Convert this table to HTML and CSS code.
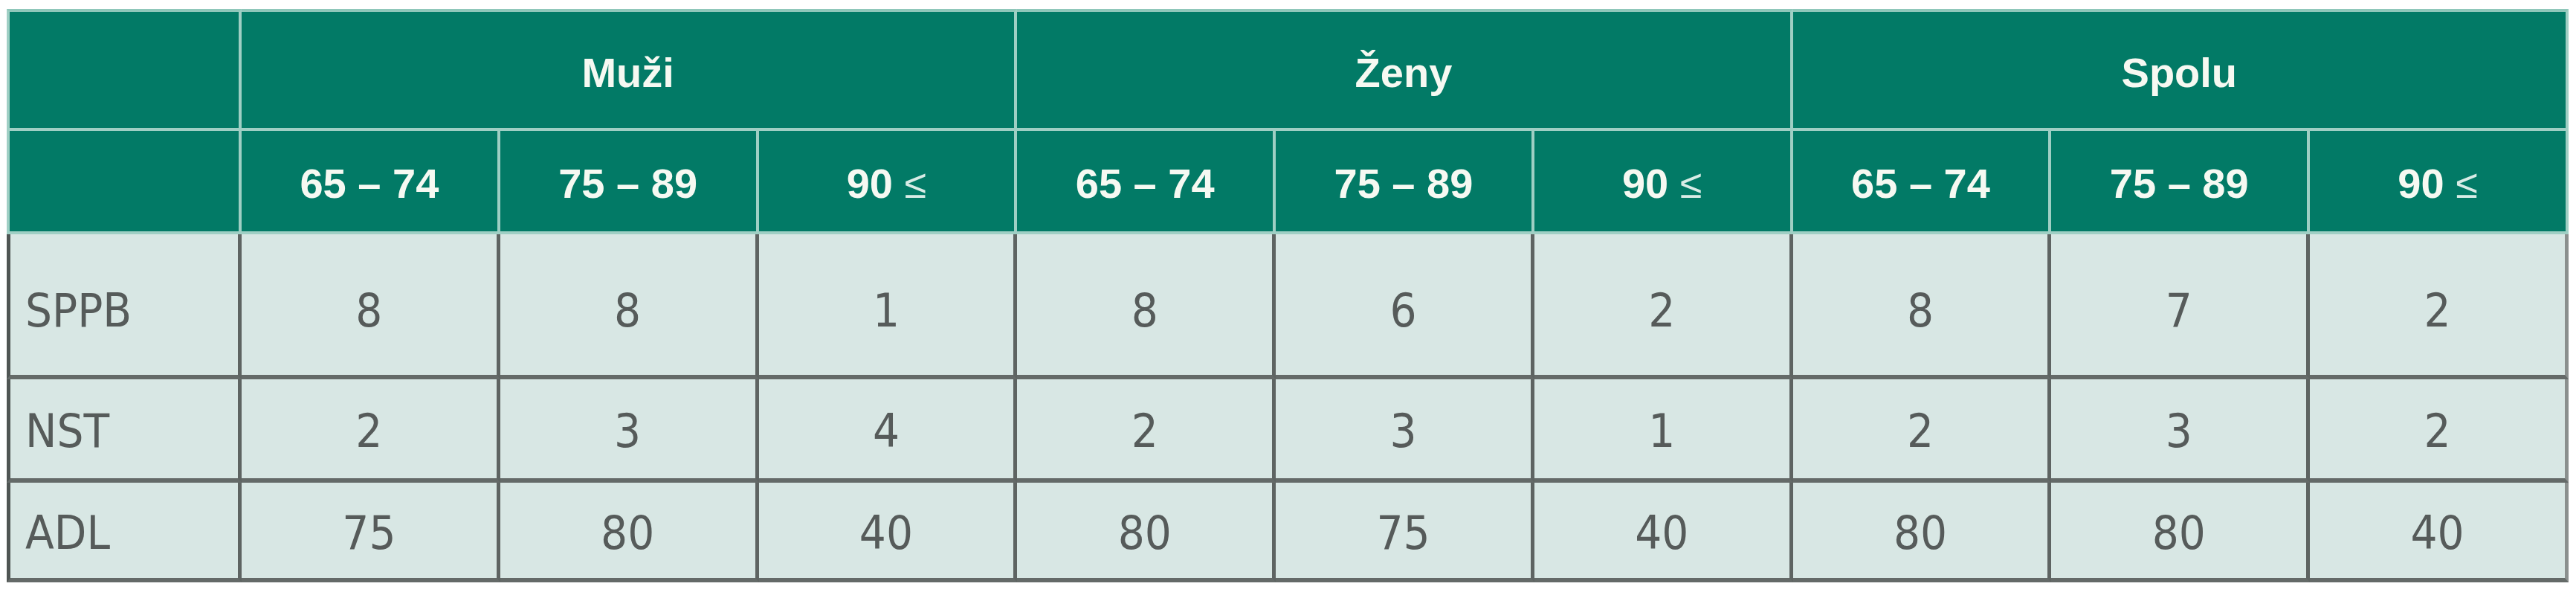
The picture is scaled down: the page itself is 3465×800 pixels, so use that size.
FILE: index.html
```html
<!DOCTYPE html>
<html lang="sk">
<head>
<meta charset="utf-8">
<title>Tabuľka</title>
<link rel="stylesheet" href="styles.css">
</head>
<body>
<table class="grid">
  <colgroup>
    <col class="col-label">
    <col><col><col><col><col><col><col><col><col>
  </colgroup>
  <thead>
    <tr class="row-group">
      <th class="corner"></th>
      <th colspan="3">Muži</th>
      <th colspan="3">Ženy</th>
      <th colspan="3">Spolu</th>
    </tr>
    <tr class="row-age">
      <th class="corner"></th>
      <th>65 – 74</th><th>75 – 89</th><th>90 <span class="le">≤</span></th>
      <th>65 – 74</th><th>75 – 89</th><th>90 <span class="le">≤</span></th>
      <th>65 – 74</th><th>75 – 89</th><th>90 <span class="le">≤</span></th>
    </tr>
  </thead>
  <tbody>
    <tr class="row-sppb">
      <td class="label">SPPB</td>
      <td>8</td><td>8</td><td>1</td>
      <td>8</td><td>6</td><td>2</td>
      <td>8</td><td>7</td><td>2</td>
    </tr>
    <tr class="row-nst">
      <td class="label">NST</td>
      <td>2</td><td>3</td><td>4</td>
      <td>2</td><td>3</td><td>1</td>
      <td>2</td><td>3</td><td>2</td>
    </tr>
    <tr class="row-adl">
      <td class="label">ADL</td>
      <td>75</td><td>80</td><td>40</td>
      <td>80</td><td>75</td><td>40</td>
      <td>80</td><td>80</td><td>40</td>
    </tr>
  </tbody>
</table>
</body>
</html>
```

FILE: styles.css
```css
html, body {
  margin: 0;
  padding: 0;
  background: #ffffff;
}

body {
  padding: 12px 0 0 9px;
}

.grid {
  width: 3446px;
  table-layout: fixed;
  border-collapse: separate;
  border-spacing: 0;
  font-family: "Liberation Sans", Arial, sans-serif;
}

.col-label {
  width: 316px;
}

/* header */
.grid th {
  background: #027a66;
  color: #f6f9f2;
  font-family: "Liberation Sans", Arial, sans-serif;
  font-weight: 700;
  font-size: 56px;
  text-align: center;
  vertical-align: middle;
  padding: 6px 0 0 0;
  border-right: 4px solid #9fcfc4;
  border-bottom: 4px solid #9fcfc4;
  white-space: nowrap;
}

.grid th:first-child {
  border-left: 4px solid #9fcfc4;
}

.row-group th {
  border-top: 4px solid #8fc7ba;
}

.le {
  font-weight: 400;
  font-size: 54px;
  color: #d8ece6;
}

.row-group { height: 164px; }
.row-age { height: 139px; }
.row-sppb { height: 195px; }
.row-nst { height: 139px; }
.row-adl { height: 134px; }

/* body */
.grid td {
  background: #d8e7e4;
  color: #565b5a;
  font-family: "Liberation Sans Narrow", "DejaVu Sans Condensed", "Liberation Sans", sans-serif;
  font-weight: 400;
  font-size: 63px;
  text-align: center;
  vertical-align: middle;
  padding: 6px 0 0 0;
  border-right: 5px solid #5e6462;
  border-bottom: 6px solid #646a68;
}

.grid td:first-child {
  border-left: 5px solid #4f5553;
}

.grid td:last-child {
  border-right: 5px solid #8b908e;
}

.grid td.label {
  text-align: left;
  padding-left: 20px;
}

.row-sppb td {
  padding-top: 16px;
}

.row-adl td {
  box-shadow: 0 4px 0 #c9d0ce;
}
```
